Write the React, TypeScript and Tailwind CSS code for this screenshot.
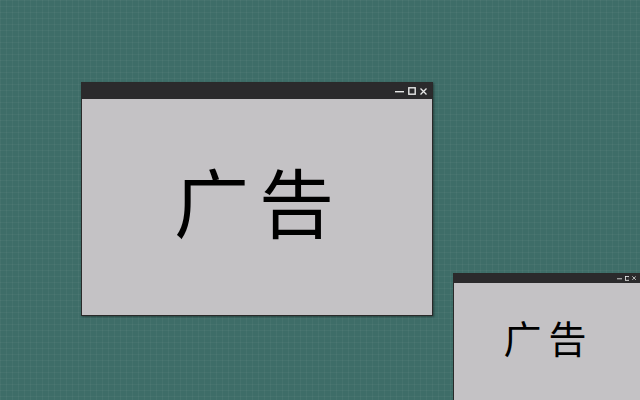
import React from "react";

function Controls({ small }: { small?: boolean }) {
  const s = small ? 0.6 : 1;
  return (
    <div className="flex items-center" style={{ gap: 4 * s }}>
      <svg width={9 * s} height={9 * s} viewBox="0 0 9 9">
        <rect x="0" y="4" width="9" height="1.4" fill="#e8e8e8" />
      </svg>
      <svg width={8 * s} height={8 * s} viewBox="0 0 8 8">
        <rect x="0.8" y="0.8" width="6.4" height="6.4" fill="none" stroke="#e8e8e8" strokeWidth="1.4" />
      </svg>
      <svg width={7 * s} height={7 * s} viewBox="0 0 7 7">
        <path d="M0.5 0.5 L6.5 6.5 M6.5 0.5 L0.5 6.5" stroke="#e8e8e8" strokeWidth="1.3" />
      </svg>
    </div>
  );
}

export default function App() {
  return (
    <div className="relative w-[640px] h-[400px] overflow-hidden bg-[#3e6d68] bg-[linear-gradient(rgba(255,255,255,0.035)_1px,transparent_1px),linear-gradient(90deg,rgba(255,255,255,0.035)_1px,transparent_1px)] bg-[size:6px_6px]">
      <div className="absolute left-[81px] top-[82px] w-[352px] h-[234px] flex flex-col border border-[#2a2a2a] shadow-[1px_1px_2px_rgba(0,0,0,0.4)]">
        <div className="h-[16px] bg-[#2b2a2c] flex items-center justify-end pr-[5px]">
          <Controls />
        </div>
        <div className="flex-1 bg-[#c4c2c5] flex items-center justify-center pb-[16px]">
          <span className="text-[75px] leading-none font-normal text-black tracking-[10px] pl-[4px] font-['Noto_Sans_CJK_SC',sans-serif]">
            广告
          </span>
        </div>
      </div>
      <div className="absolute left-[453px] top-[273px] w-[190px] h-[130px] flex flex-col border border-[#2a2a2a]">
        <div className="h-[9px] bg-[#2b2a2c] flex items-center justify-end pr-[6px]">
          <Controls small />
        </div>
        <div className="flex-1 bg-[#c4c2c5] flex items-center justify-center pb-[12px]">
          <span className="text-[38px] leading-none font-normal text-black tracking-[7px] pl-[1px] font-['Noto_Sans_CJK_SC',sans-serif]">
            广告
          </span>
        </div>
      </div>
    </div>
  );
}
